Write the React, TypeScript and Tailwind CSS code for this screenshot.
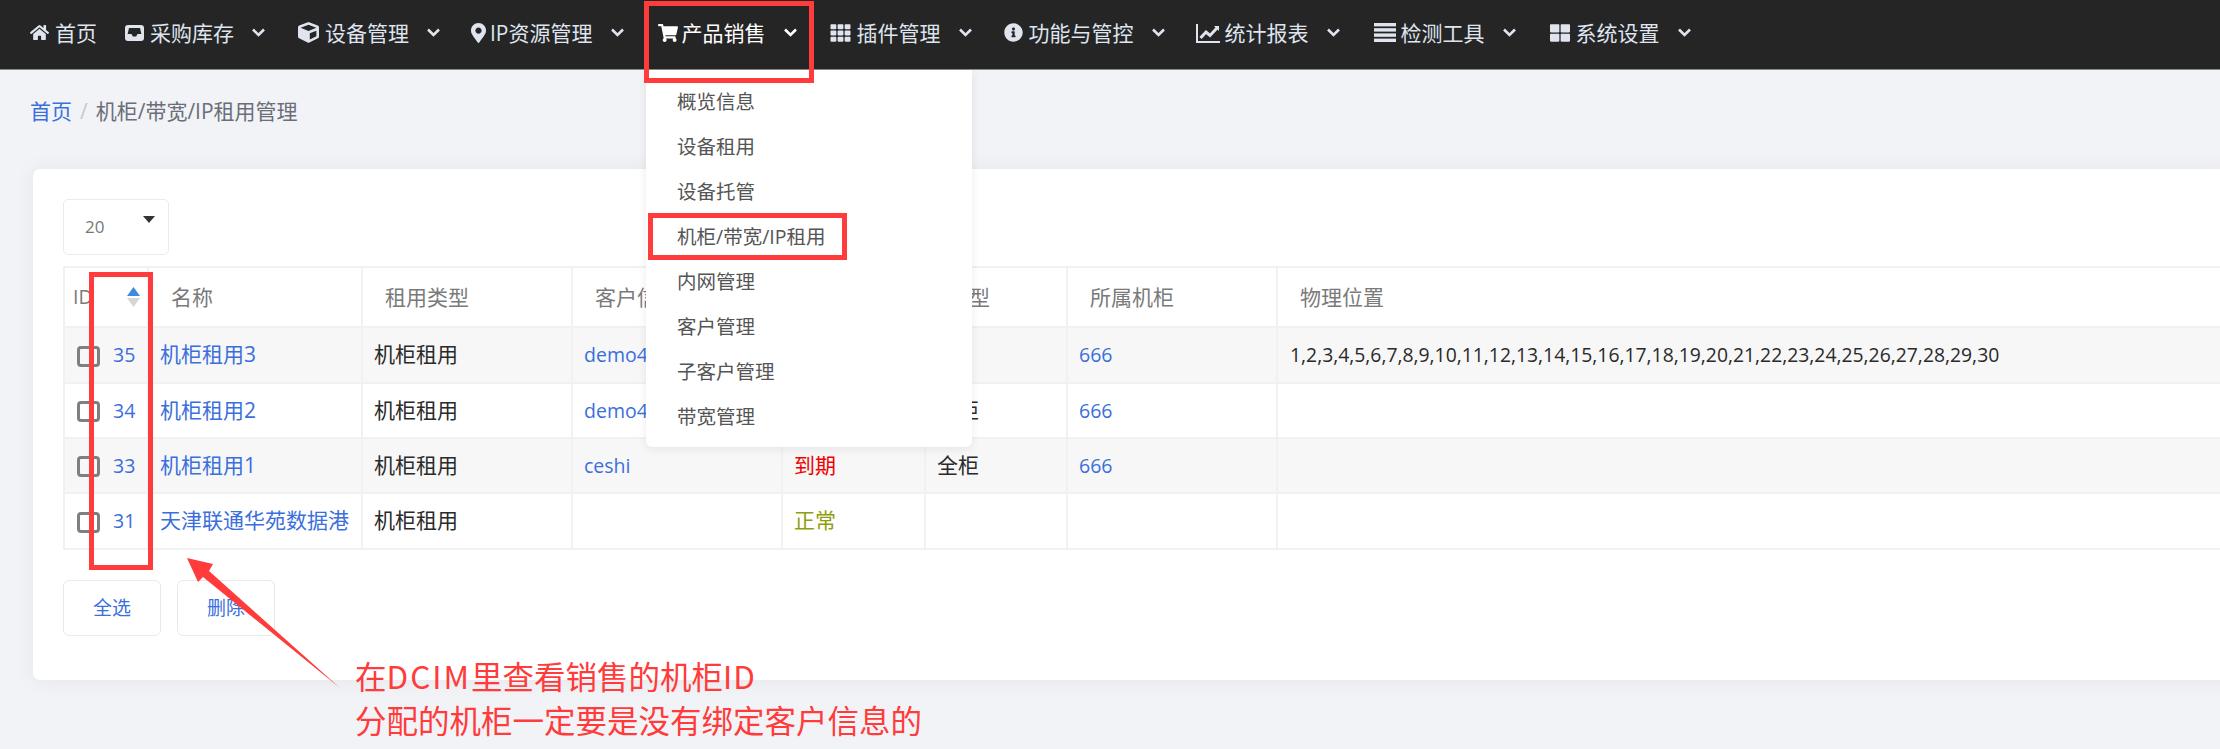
import React from "react";
import {
  FaHome,
  FaCube,
  FaMapMarkerAlt,
  FaShoppingCart,
  FaTh,
  FaInfoCircle,
  FaThLarge,
} from "react-icons/fa";

const InboxIcon = () => (
  <svg width="19" height="16" viewBox="0 0 19 16" fill="currentColor">
    <path
      fillRule="evenodd"
      d="M3 0 H16 A3 3 0 0 1 19 3 V13 A3 3 0 0 1 16 16 H3 A3 3 0 0 1 0 13 V3 A3 3 0 0 1 3 0 Z M4 3 L2.6 9 H6.5 L7.8 11.4 H11.2 L12.5 9 H16.4 L15 3 Z"
    />
  </svg>
);

const ChartIcon = () => (
  <svg width="24" height="20" viewBox="0 0 24 20" fill="none" stroke="currentColor">
    <path d="M1 1 V19 H24" strokeWidth="2" />
    <path d="M4.5 15 L10 9 L14 12.5 L21 5" strokeWidth="3" />
    <path d="M18 3 H23 V8 Z" fill="currentColor" stroke="none" />
  </svg>
);

const ListIcon = () => (
  <svg width="22" height="19" viewBox="0 0 22 19" fill="currentColor">
    <rect x="0" y="0" width="22" height="3.4" />
    <rect x="0" y="5.2" width="22" height="3.4" />
    <rect x="0" y="10.4" width="22" height="3.4" />
    <rect x="0" y="15.6" width="22" height="3.4" />
  </svg>
);

const Chevron = () => (
  <svg className="ml-[18px]" width="13" height="9" viewBox="0 0 13 9" fill="none" stroke="currentColor" strokeWidth="2.6">
    <path d="M1 1.5 L6.5 7 L12 1.5" />
  </svg>
);

const navItems = [
  { icon: <FaHome className="w-[19px] h-[19px]" />, label: "首页", box: "ml-[30px] w-[19px] mr-[6px]", chevron: false },
  { icon: <InboxIcon />, label: "采购库存", box: "ml-[28px] w-[19px] mr-[6px]", chevron: true },
  { icon: <FaCube className="w-[21px] h-[21px]" />, label: "设备管理", box: "ml-[33px] w-[21px] mr-[6px]", chevron: true },
  { icon: <FaMapMarkerAlt className="w-[15px] h-[20px]" />, label: "IP资源管理", box: "ml-[31px] w-[15px] mr-[4px]", chevron: true },
  { icon: <FaShoppingCart className="w-[20px] h-[18px]" />, label: "产品销售", box: "ml-[34px] w-[20px] mr-[4px]", chevron: true, active: true },
  { icon: <FaTh className="w-[21px] h-[20px]" />, label: "插件管理", box: "ml-[33px] w-[21px] mr-[6px]", chevron: true },
  { icon: <FaInfoCircle className="w-[19px] h-[19px]" />, label: "功能与管控", box: "ml-[32px] w-[19px] mr-[6px]", chevron: true },
  { icon: <ChartIcon />, label: "统计报表", box: "ml-[31px] w-[24px] mr-[5px]", chevron: true },
  { icon: <ListIcon />, label: "检测工具", box: "ml-[34px] w-[22px] mr-[5px]", chevron: true },
  { icon: <FaThLarge className="w-[20px] h-[20px]" />, label: "系统设置", box: "ml-[34px] w-[20px] mr-[6px]", chevron: true },
];

const menu = ["概览信息", "设备租用", "设备托管", "机柜/带宽/IP租用", "内网管理", "客户管理", "子客户管理", "带宽管理"];

const rows = [
  { id: "35", name: "机柜租用3", client: "demo4", status: "正常", statusClass: "text-[#8f9e0c]", kind: "", rack: "666", pos: "1,2,3,4,5,6,7,8,9,10,11,12,13,14,15,16,17,18,19,20,21,22,23,24,25,26,27,28,29,30", bg: "bg-[#f7f7f7]" },
  { id: "34", name: "机柜租用2", client: "demo4", status: "正常", statusClass: "text-[#8f9e0c]", kind: "全柜", rack: "666", pos: "", bg: "bg-white" },
  { id: "33", name: "机柜租用1", client: "ceshi", status: "到期", statusClass: "text-[#f00000]", kind: "全柜", rack: "666", pos: "", bg: "bg-[#f7f7f7]" },
  { id: "31", name: "天津联通华苑数据港", client: "", status: "正常", statusClass: "text-[#8f9e0c]", kind: "", rack: "", pos: "", bg: "bg-white" },
];

const headers = ["名称", "租用类型", "客户信息", "状态", "类型", "所属机柜", "物理位置"];

const td = "border-2 border-[#eff1f3] px-[11px] align-middle";

export default function App() {
  return (
    <div className="relative w-[2220px] h-[749px] overflow-hidden bg-[#f1f3f7] text-[21px] font-['Open_Sans','Noto_Sans_CJK_SC',sans-serif]">
      <nav className="flex h-[70px] items-center pb-[4px] bg-[#252525] border-b border-[#8a8a8a] text-[#dfe4ee]">
        {navItems.map((item) => (
          <div key={item.label} className={item.active ? "flex items-center text-white" : "flex items-center"}>
            <span className={`flex justify-center ${item.box}`}>{item.icon}</span>
            <span className="leading-[30px] whitespace-nowrap">{item.label}</span>
            {item.chevron && <Chevron />}
          </div>
        ))}
      </nav>

      <div className="mt-[26px] ml-[30px] h-[30px] leading-[30px] flex">
        <span className="text-[#3b6fdc]">首页</span>
        <span className="mx-[8px] text-[#c5c8ce]">/</span>
        <span className="text-[#6b6e78]">机柜/带宽/IP租用管理</span>
      </div>

      <div className="mt-[43px] ml-[33px] mr-[-20px] pl-[30px] pt-[30px] pb-[44px] bg-white rounded-[7px] shadow-[0_0_22px_rgba(0,0,0,0.06)]">
        <div className="flex w-[106px] h-[56px] items-center justify-between pl-[21px] pr-[13px] border border-[#e8ecef] rounded-[5px] text-[17px] text-[#777]">
          <span>20</span>
          <span className="mb-[16px] w-0 h-0 border-x-[6.5px] border-x-transparent border-t-[7px] border-t-[#333]" />
        </div>

        <table className="mt-[11px] w-[2200px] table-fixed border-collapse">
          <colgroup>
            <col className="w-[84px]" />
            <col className="w-[214px]" />
            <col className="w-[210px]" />
            <col className="w-[210px]" />
            <col className="w-[143px]" />
            <col className="w-[142px]" />
            <col className="w-[210px]" />
            <col />
          </colgroup>
          <thead>
            <tr className="h-[60px] text-[#7a7a7a]">
              <th className="border-2 border-[#eff1f3] pl-[8px] pr-[7px] font-normal text-left">
                <div className="flex items-center justify-between">
                  <span className="text-[19.5px]">ID</span>
                  <svg width="13" height="20" viewBox="0 0 13 20">
                    <path d="M6.5 0 L13 9 H0 Z" fill="#3b8be0" />
                    <path d="M0 11 H13 L6.5 20 Z" fill="#d6d6d6" />
                  </svg>
                </div>
              </th>
              {headers.map((h) => (
                <th key={h} className="border-2 border-[#eff1f3] px-[22px] pt-[2px] font-normal text-left whitespace-nowrap">
                  {h}
                </th>
              ))}
            </tr>
          </thead>
          <tbody className="text-[#2a2a2a]">
            {rows.map((r, i) => (
              <tr key={r.id} className={i === 0 || i === 3 ? `h-[56px] ${r.bg}` : `h-[55px] ${r.bg}`}>
                <td className="border-2 border-[#eff1f3] pl-[12px] align-middle">
                  <div className="flex items-center">
                    <span className="w-[23px] h-[21px] border-[3px] border-[#7f7f7f] rounded-[4px] mt-[2px]" />
                    <span className="ml-[13px] text-[19.5px] text-[#3b6fdc]">{r.id}</span>
                  </div>
                </td>
                <td className={`${td} text-[#3b6fdc] whitespace-nowrap`}>{r.name}</td>
                <td className={td}>机柜租用</td>
                <td className={`${td} text-[19.5px] text-[#3b6fdc]`}>{r.client}</td>
                <td className={`${td} ${r.statusClass}`}>{r.status}</td>
                <td className={td}>{r.kind}</td>
                <td className={`${td} text-[19.5px] text-[#3b6fdc]`}>{r.rack}</td>
                <td className="border-2 border-[#eff1f3] px-[12px] align-middle text-[19.35px] whitespace-nowrap">{r.pos}</td>
              </tr>
            ))}
          </tbody>
        </table>

        <div className="mt-[30px] flex gap-[16px]">
          <button className="w-[98px] h-[56px] border border-[#e4eaed] rounded-[6px] bg-white text-[19px] text-[#3b6fdc]">全选</button>
          <button className="w-[98px] h-[56px] border border-[#e4eaed] rounded-[6px] bg-white text-[19px] text-[#3b6fdc]">删除</button>
        </div>
      </div>

      {/* open dropdown */}
      <div className="absolute left-[646px] top-[70px] w-[326px] h-[377px] pt-[9px] bg-white rounded-b-[6px] shadow-[0_2px_10px_rgba(0,0,0,0.08)] text-[19.5px] text-[#555]">
        {menu.map((m) => (
          <div key={m} className="h-[45px] leading-[45px] pl-[31px]">{m}</div>
        ))}
      </div>

      {/* red annotations */}
      <div className="absolute left-[644px] top-[1px] w-[170px] h-[82px] border-[5px] border-[#ff3b3b]" />
      <div className="absolute left-[648px] top-[213px] w-[199px] h-[47px] border-[5px] border-[#ff3b3b]" />
      <div className="absolute left-[89px] top-[272px] w-[64px] h-[298px] border-[5px] border-[#ff3b3b]" />
      <svg className="absolute left-0 top-0 pointer-events-none" width="400" height="749" viewBox="0 0 400 749">
        <polygon points="187,558 213,564 209,571 340,688 203,577 198,582" fill="#ff3b3b" />
      </svg>
      <div className="absolute left-[355px] top-[653px] text-[31.5px] leading-[44px] text-[#ff3b3b] whitespace-nowrap font-['Noto_Sans_CJK_SC',sans-serif]">
        <div>
          在<span className="tracking-[2px]">DCIM</span>里查看销售的机柜<span className="tracking-[1px]">ID</span>
        </div>
        <div>分配的机柜一定要是没有绑定客户信息的</div>
      </div>
    </div>
  );
}
